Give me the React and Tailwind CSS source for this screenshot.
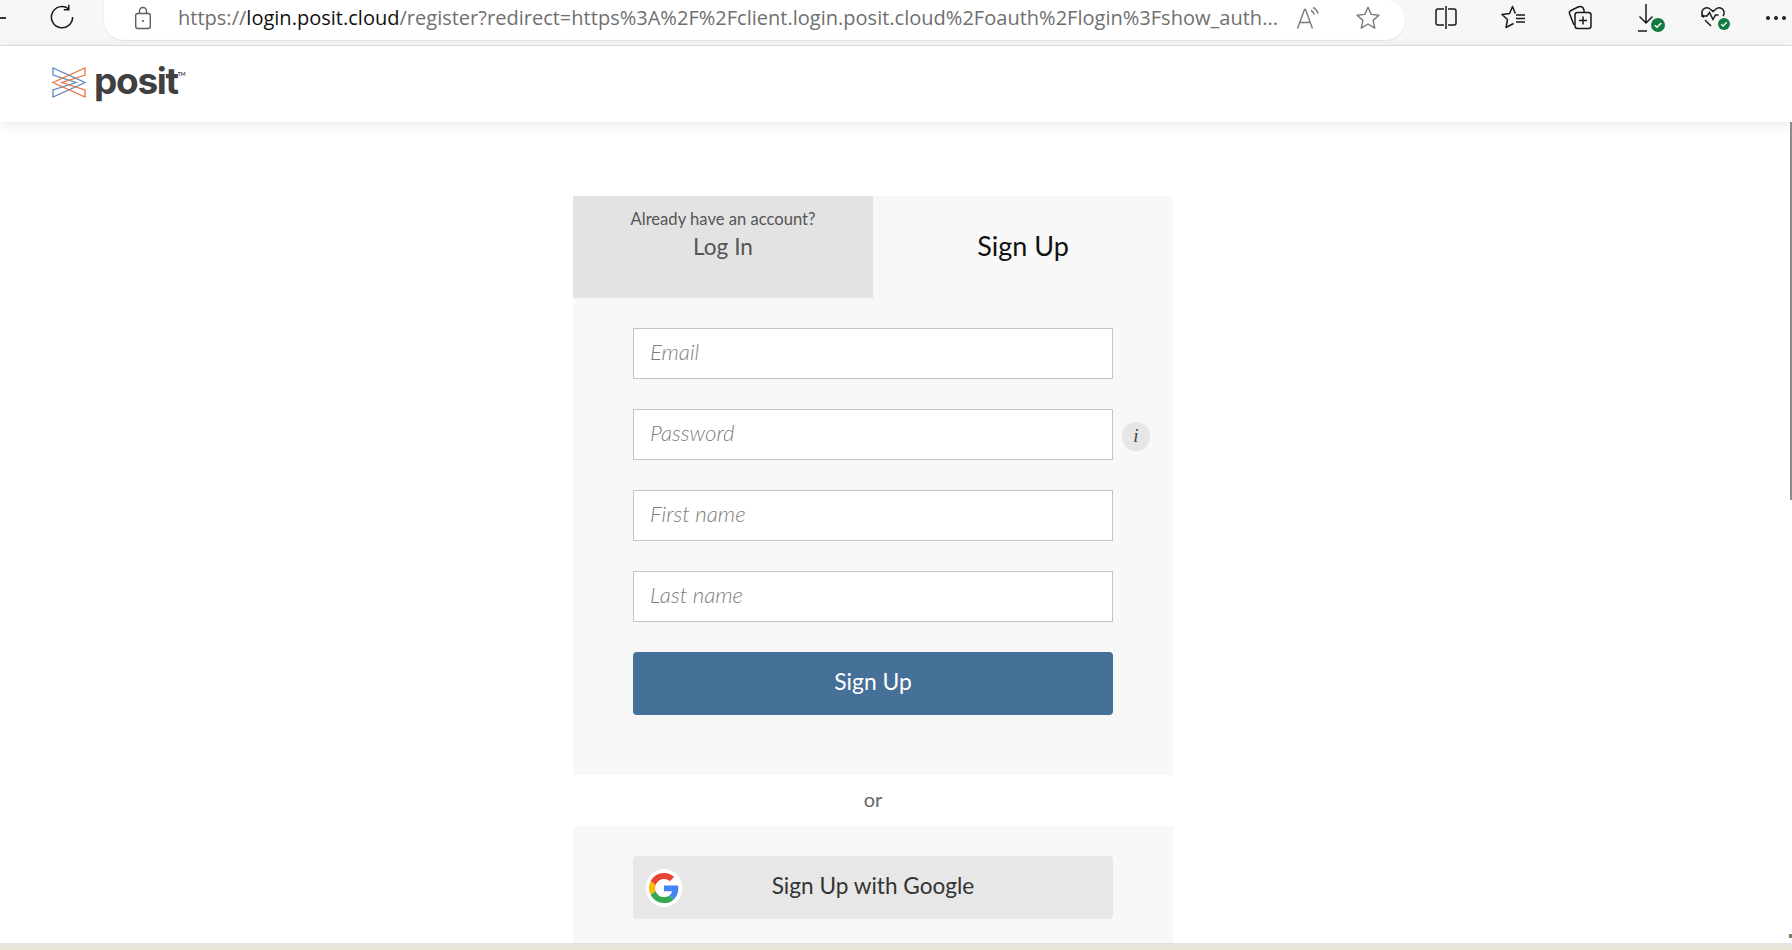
import React from "react";

const Lock = () => (
  <svg width="20" height="24" viewBox="0 0 20 24" fill="none" stroke="#5f5f5f" strokeWidth="1.4">
    <rect x="2.7" y="7.5" width="14.6" height="15" rx="2" />
    <path d="M6.5 7.5V5a3.5 3.5 0 0 1 7 0v2.5" />
    <circle cx="10" cy="15" r="1.1" fill="#5f5f5f" stroke="none" />
  </svg>
);

const Reload = () => (
  <svg width="26" height="26" viewBox="0 0 26 26" fill="none" stroke="#1a1a1a" strokeWidth="1.5">
    <path d="M19.5 4.8A10.6 10.6 0 1 0 23.6 13" />
    <path d="M19.8 0.8v5h-5" />
  </svg>
);

const ReadAloud = () => (
  <svg width="26" height="26" viewBox="0 0 26 26" fill="none" stroke="#7a7a7a" strokeWidth="1.4">
    <path d="M1.5 23.5 8.5 4.5h1l7 19M4 17.5h10" />
    <path d="M15 5.5c1.600.8 2.800 2.200 3.200 4M17 2.500c2.600 1.200 4.400 3.400 5 6.200" />
  </svg>
);

const Star = () => (
  <svg width="26" height="26" viewBox="0 0 26 26" fill="none" stroke="#7a7a7a" strokeWidth="1.4" strokeLinejoin="round">
    <path d="M13 2.200l3.200 7.200 7.800.8-5.900 5.200 1.700 7.700L13 19l-6.800 4.100 1.700-7.700L2 10.200l7.800-.8z" />
  </svg>
);

const SplitView = () => (
  <svg width="26" height="26" viewBox="0 0 26 26" fill="none" stroke="#1a1a1a" strokeWidth="1.5">
    <path d="M11 5H5a2 2 0 0 0-2 2v12a2 2 0 0 0 2 2h6M15 5h6a2 2 0 0 1 2 2v12a2 2 0 0 1-2 2h-6M13 2v23" />
  </svg>
);

const Favorites = () => (
  <svg width="26" height="26" viewBox="0 0 26 26" fill="none" stroke="#1a1a1a" strokeWidth="1.5" strokeLinejoin="round">
    <path d="M13.500 19.500 6 23.500l1.500-8L2 10.500l7.600-1L12.500 2.500l2.800 7" />
    <path d="M16 11h9M16 14.500h9M16 18h9" />
  </svg>
);

const Collections = () => (
  <svg width="26" height="26" viewBox="0 0 26 26" fill="none" stroke="#1a1a1a" strokeWidth="1.5">
    <rect x="8" y="8.500" width="16" height="16" rx="2.500" />
    <path d="M16 12.500v8M12 16.500h8" />
    <path d="M7 21 2.500 9.500A2.500 2.500 0 0 1 4 6.500L11 3c2.500-1 5-.5 6 3v2.500" />
  </svg>
);

const CheckBadge = ({ size }) => (
  <svg width={size} height={size} viewBox="0 0 14 14" className="absolute -right-1 bottom-0">
    <circle cx="7" cy="7" r="7" fill="#107c41" />
    <path d="M3.800 7.200 6 9.300l4.200-4.400" fill="none" stroke="#fff" strokeWidth="1.500" />
  </svg>
);

const Download = () => (
  <div className="relative ml-[3px] h-[28px] w-[24px]">
    <svg width="24" height="28" viewBox="0 0 24 28" fill="none" stroke="#1a1a1a" strokeWidth="1.5">
      <path d="M9 0v19M2.500 12.500 9 19l6.500-6.500M1 27h9" />
    </svg>
    <CheckBadge size={14} />
  </div>
);

const Health = () => (
  <div className="relative -ml-[2px] h-[26px] w-[26px]">
    <svg width="26" height="26" viewBox="0 0 26 26" fill="none" stroke="#1a1a1a" strokeWidth="1.5">
      <path d="M4 13.500C2 11.500 1.500 9.500 2 7.500 3 4 7.500 2.500 10 5l3 2.500L16 5c2.500-2.500 7-1 8 2.500.4 1.500.2 3-1 4.500" />
      <path d="M1 12h6l2.500-3.500 3.500 7 2.500-4.500h3M5 16l6 6" />
    </svg>
    <CheckBadge size={12} />
  </div>
);

const PositMark = () => (
  <svg width="34" height="31" viewBox="0 0 34 31" fill="none" strokeWidth="1.3" className="mb-[4px]">
    <path d="M1 8V1l32 14.500L1 30v-7l23-7.500z" stroke="#5b8ac0" />
    <path d="M33 8V1L1 15.500 33 30v-7l-23-7.500z" stroke="#ee7444" />
  </svg>
);

const GoogleG = () => (
  <svg width="30" height="30" viewBox="0 0 48 48">
    <path fill="#EA4335" d="M24 9.500c3.500 0 6.700 1.200 9.200 3.600l6.900-6.900C35.900 2.400 30.500 0 24 0 14.600 0 6.500 5.400 2.600 13.200l8 6.200C12.500 13.700 17.800 9.500 24 9.500z" />
    <path fill="#4285F4" d="M47 24.500c0-1.600-.1-3.100-.4-4.500H24v9h12.900c-.6 3-2.200 5.500-4.700 7.200l7.700 6C44.400 38 47 31.800 47 24.500z" />
    <path fill="#FBBC05" d="M10.600 28.600a14.500 14.500 0 0 1 0-9.200l-8-6.200a24 24 0 0 0 0 21.600l8-6.200z" />
    <path fill="#34A853" d="M24 48c6.500 0 11.900-2.100 15.900-5.800l-7.700-6c-2.200 1.400-4.900 2.300-8.200 2.300-6.200 0-11.500-4.200-13.400-9.900l-8 6.200C6.500 42.600 14.600 48 24 48z" />
  </svg>
);

const fields = ["Email", "Password", "First name", "Last name"];

export default function App() {
  return (
    <div className="relative h-[950px] overflow-hidden bg-white font-['Lato',sans-serif]">
      {/* browser chrome */}
      <div className="flex h-[46px] items-start border-b border-[#e3e3e3] bg-[#f7f7f7]">
        <div className="mt-[17px] h-[1.5px] w-[6px] bg-[#333]" />
        <div className="ml-[43px] mt-[4px]">
          <Reload />
        </div>
        <div className="ml-[29px] flex h-[40px] w-[1301px] items-center rounded-r-[20px] rounded-bl-[20px] bg-white pb-[4px] pl-[29px] pr-[20px] font-['Open_Sans',sans-serif] shadow-[0_1px_2px_rgba(0,0,0,0.08)]">
          <Lock />
          <div className="ml-[25px] w-[1106px] whitespace-nowrap text-[20.05px] text-[#6f6f6f]">
            https://<span className="text-[#111]">login.posit.cloud</span>/register?redirect=https%3A%2F%2Fclient.login.posit.cloud%2Foauth%2Flogin%3Fshow_auth...
          </div>
          <div className="ml-[12px]">
            <ReadAloud />
          </div>
          <div className="ml-[33px]">
            <Star />
          </div>
        </div>
        <div className="ml-[28px] mt-[4px] flex items-start gap-[41px]">
          <SplitView />
          <Favorites />
          <Collections />
          <Download />
          <Health />
        </div>
        <div className="ml-[40px] mt-[16px] flex gap-[4px]">
          <span className="size-[4px] rounded-full bg-[#222]" />
          <span className="size-[4px] rounded-full bg-[#222]" />
          <span className="size-[4px] rounded-full bg-[#222]" />
        </div>
      </div>

      {/* site header */}
      <div className="relative flex h-[76px] items-center bg-white pl-[52px] shadow-[0_2px_12px_rgba(0,0,0,0.1)]">
        <PositMark />
        <span className="mb-[8px] ml-[8px] font-['Inter',sans-serif] text-[37px] leading-none font-bold tracking-[-1.3px] text-[#404041]">
          posit
        </span>
        <span className="mb-[18px] text-[5px] font-bold text-[#404041]">TM</span>
      </div>

      {/* form */}
      <div className="mx-auto mt-[74px] w-[600px] -translate-x-[23px]">
        <div className="bg-[#f8f8f8] pb-[60px]">
          <div className="flex h-[102px]">
            <div className="flex w-[300px] flex-col items-center bg-[#e3e3e3] pt-[11px] text-[#555]">
              <span className="text-[16.6px] leading-[24px]">Already have an account?</span>
              <span className="mt-[2px] text-[22.6px] leading-[28px]">Log In</span>
            </div>
            <div className="flex w-[300px] justify-center pt-[33px] text-[27px] leading-[34px] text-[#111]">
              Sign Up
            </div>
          </div>
          <div className="ml-[60px] flex w-[480px] flex-col gap-[30px] pt-[30px]">
            {fields.map((name) => (
              <div key={name} className="relative">
                <input
                  type="text"
                  placeholder={name}
                  className="h-[51px] w-full border border-[#c4c4c4] bg-white px-4 pb-[4px] text-[22.2px] font-light italic outline-none placeholder:text-[#7e7e7e]"
                />
                {name === "Password" && (
                  <span className="absolute -right-[37px] top-[13px] flex h-[29px] w-[28px] items-center justify-center rounded-full bg-[#e6e6e6] font-['Liberation_Serif',serif] text-[19px] italic text-[#444]">
                    i
                  </span>
                )}
              </div>
            ))}
            <button className="h-[63px] rounded-[4px] bg-[#457098] pb-[4px] text-[22.8px] text-white">Sign Up</button>
          </div>
        </div>
        <div className="flex h-[51px] items-center justify-center pb-[4px] text-[20px] text-[#666]">or</div>
        <div className="h-[200px] bg-[#f8f8f8] px-[60px] pt-[30px]">
          <button className="relative h-[63px] w-full rounded-[4px] bg-[#e7e7e7] pb-[3px] text-[22.6px] text-[#333]">
            Sign Up with Google
            <span className="absolute left-[13px] top-[13px] flex h-[38px] w-[36px] items-center justify-center rounded-full bg-white">
              <GoogleG />
            </span>
          </button>
        </div>
      </div>

      {/* scrollbar + bottom edge */}
      <div className="absolute right-0 top-[122px] h-[378px] w-[2px] bg-[#8a8a8a]" />
      <div className="absolute bottom-[12px] right-0 h-[4px] w-[3px] bg-[#8a7a5a]" />
      <div className="absolute bottom-0 left-0 right-0 h-[7px] border-t-2 border-[#e3e3e3] bg-[#e9e8d6]" />
    </div>
  );
}
